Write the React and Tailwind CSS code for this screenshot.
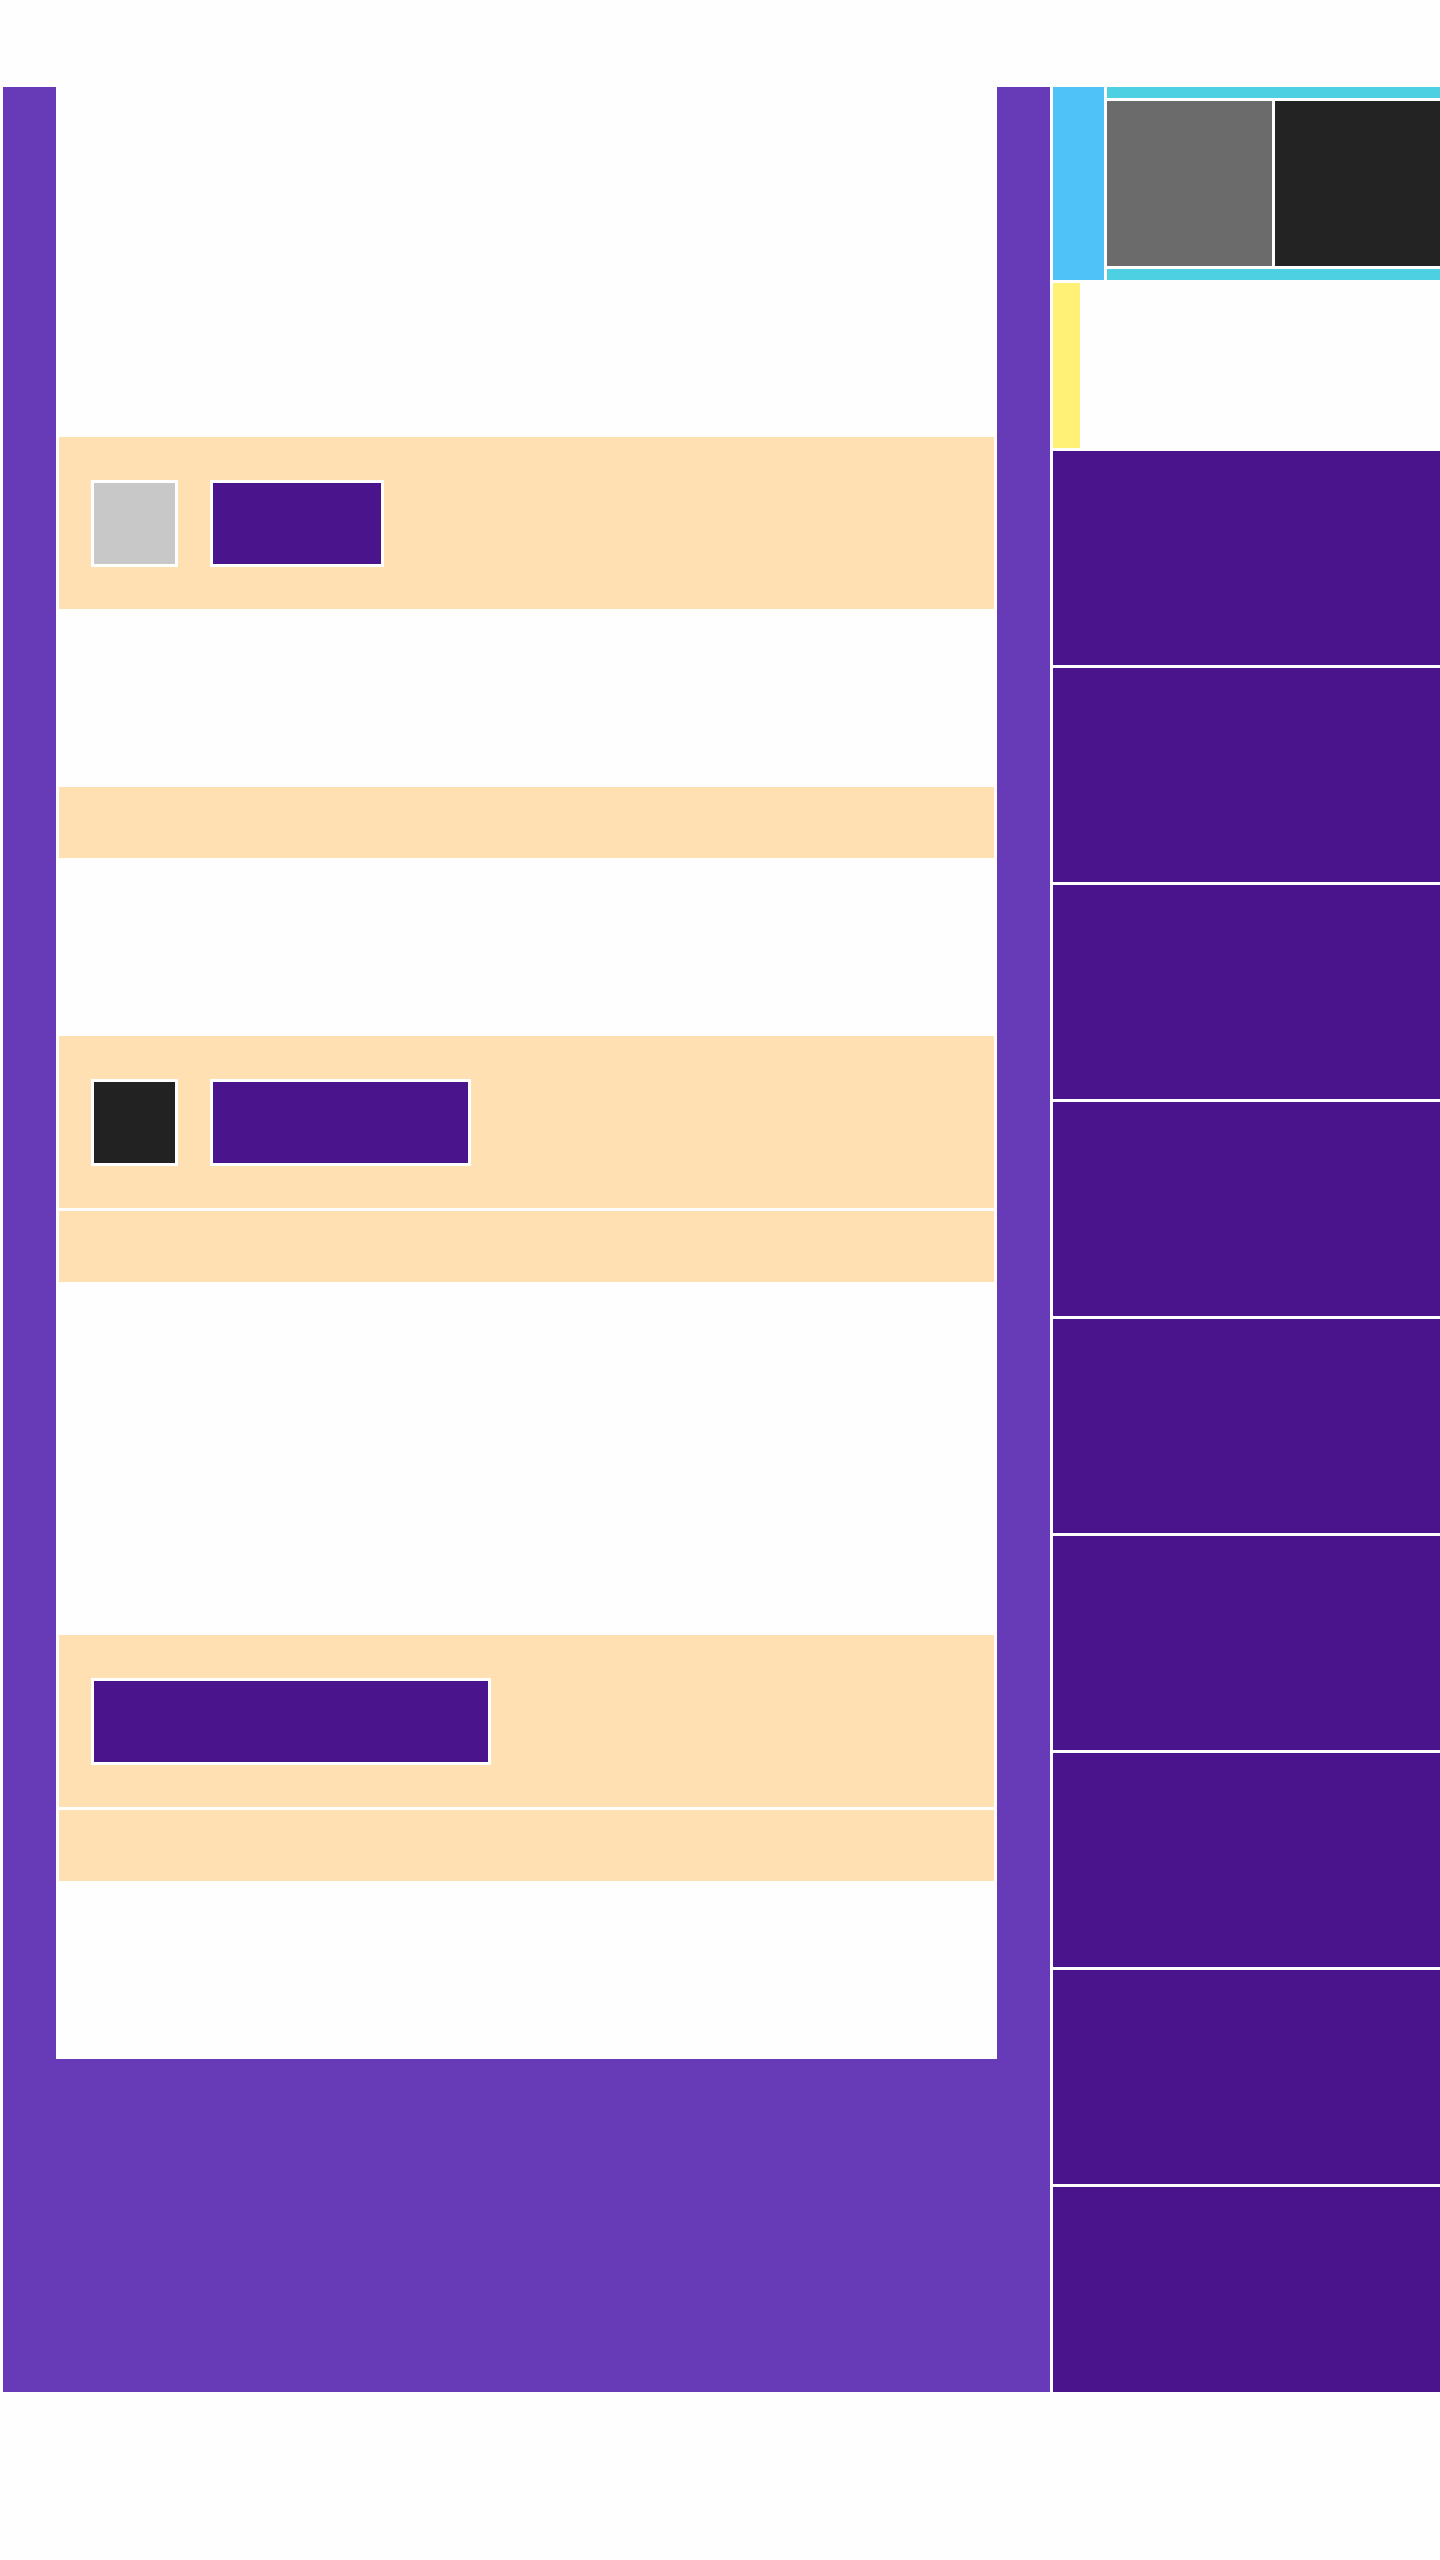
const Blank = () => <div className="h-[172px] shrink-0" />;

function Band({ children }) {
  return (
    <div className="h-[172px] shrink-0 bg-[#FFE0B2] flex items-center gap-8 px-8">
      {children}
    </div>
  );
}

const Strip = () => <div className="h-[71px] shrink-0 bg-[#FFE0B2]" />;

const Tile = ({ className }) => (
  <div className={`h-[87px] shrink-0 border-[3px] border-white ${className}`} />
);

export default function App() {
  return (
    <div className="min-h-[2560px] bg-[#fefefe] overflow-hidden">
      <div className="flex gap-[3px] pt-[87px] pl-[3px]">
        {/* main panel */}
        <div className="w-[1047px] h-[2305px] shrink-0 bg-[#673AB7] px-[53px]">
          <div className="bg-[#fefefe] flex flex-col gap-[3px] px-[3px] pb-[3px]">
            <Blank />
            <Blank />
            <Band>
              <Tile className="w-[87px] bg-[#C8C8C8]" />
              <Tile className="w-[174px] bg-[#4A148C]" />
            </Band>
            <Blank />
            <Strip />
            <Blank />
            <Band>
              <Tile className="w-[87px] bg-[#222222]" />
              <Tile className="w-[261px] bg-[#4A148C]" />
            </Band>
            <Strip />
            <Blank />
            <Blank />
            <Band>
              <Tile className="w-[400px] bg-[#4A148C]" />
            </Band>
            <Strip />
            <Blank />
          </div>
        </div>

        {/* side column */}
        <div className="flex-1 min-w-0 h-[2305px] flex flex-col gap-[3px] overflow-hidden">
          <div className="flex gap-[3px] shrink-0">
            <div className="w-[51px] h-[193px] bg-[#4FC3F7]" />
            <div className="flex flex-col gap-[3px] w-[333px]">
              <div className="h-[11px] bg-[#4DD0E1]" />
              <div className="flex gap-[3px]">
                <div className="w-[165px] h-[165px] bg-[#6B6B6B]" />
                <div className="w-[165px] h-[165px] bg-[#232323]" />
              </div>
              <div className="h-[11px] bg-[#4DD0E1]" />
            </div>
          </div>
          <div className="w-[27px] h-[165px] shrink-0 bg-[#FFF176]" />
          {[0, 1, 2, 3, 4, 5, 6, 7, 8].map((i) => (
            <div key={i} className="h-[214px] shrink-0 bg-[#4A148C]" />
          ))}
        </div>
      </div>
    </div>
  );
}
